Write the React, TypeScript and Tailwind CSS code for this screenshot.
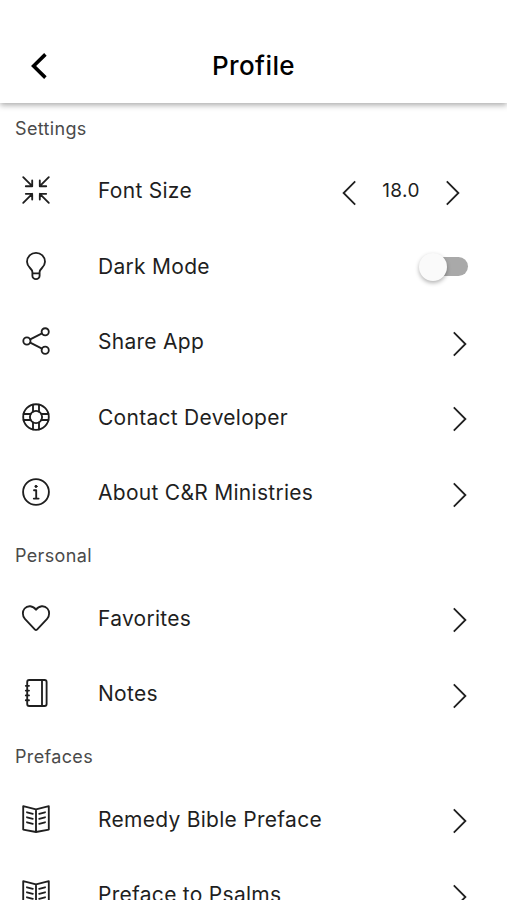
import { useState } from "react";
import type { ReactNode } from "react";

const icons: Record<string, ReactNode> = {
    resize: (
        <path d="M1.2 1.2l9 9M3.8 10.2h6.4V4.4M26.8 1.2l-9 9M24.2 10.2h-6.4V4.4M1.2 26.8l9-9M3.8 17.8h6.4v5.8M26.8 26.8l-9-9M24.2 17.8h-6.4v5.8" />
    ),
    bulb: (
        <path d="M10.4 21.4v-1.5C10.4 16.6 5 15.4 5 9.8a9 9 0 0 1 18 0c0 5.6-5.4 6.8-5.4 10.1v3.8a3.6 3.4 0 0 1-7.2 0zM10.4 21.4h7.2" />
    ),
    share: (
        <>
            <circle cx="4.9" cy="14" r="3.6" />
            <circle cx="23.2" cy="4.8" r="3.6" />
            <circle cx="23.2" cy="23.2" r="3.6" />
            <path d="M8.2 12.3L20 6.4M8.2 15.7L20 21.6" />
        </>
    ),
    support: (
        <>
            <circle cx="14" cy="14" r="12.8" />
            <circle cx="14" cy="14" r="6.1" />
            <path d="M11 1.6v7M17 1.6v7M11 19.4v7M17 19.4v7M1.6 11h7M1.6 17h7M19.4 11h7M19.4 17h7" />
        </>
    ),
    info: (
        <>
            <circle cx="14" cy="14" r="12.9" />
            <circle cx="14" cy="8.4" r="1.1" fill="currentColor" strokeWidth="1" />
            <path d="M12 12.2h2.2v8.2M11.8 20.6h4.8" />
        </>
    ),
    heart: (
        <path d="M13 25.6L2.9 14.9C.2 12 .3 7.1 2.6 4.5c3-3.3 8.4-3.1 11.4 1.3 3-4.4 8.4-4.6 11.4-1.3 2.3 2.6 2.4 7.5-.3 10.4L15 25.6q-1 .9-2 0z" />
    ),
    notes: (
        <>
            <rect x="5.2" y="1" width="19.4" height="26" rx="2" />
            <path d="M20 1v26M3.8 6.8h3.2M3.8 11.6h3.2M3.8 16.4h3.2M3.8 21.2h3.2" />
        </>
    ),
    book: (
        <path d="M14 4.3L1.2 1.2v23.4L14 27l12.8-2.4V1.2zM14 4.3V27M5 7.3l5.8 1.5M5 12.3l5.8 1.5M5 17.3l5.8 1.5M23 7.3l-5.8 1.5M23 12.3l-5.8 1.5M23 17.3l-5.8 1.5" />
    ),
};

function RowIcon({ name }: { name: string }) {
    return (
        <svg
            viewBox="0 0 28 28"
            className="w-7 h-7 mb-[2px] shrink-0 overflow-visible"
            fill="none"
            stroke="currentColor"
            strokeWidth="1.85"
            strokeLinecap="round"
            strokeLinejoin="round"
        >
            {icons[name]}
        </svg>
    );
}

function Chevron({ left = false }: { left?: boolean }) {
    return (
        <svg
            viewBox="0 0 14 26"
            className={`w-3.5 h-[26px] mt-[3px] ${left ? "rotate-180" : ""}`}
            fill="none"
            stroke="currentColor"
            strokeWidth="1.8"
        >
            <path d="M.8 1.4L12.4 13 .8 24.6" />
        </svg>
    );
}

function Row({ icon, label, children }: { icon: string; label: string; children?: ReactNode }) {
    return (
        <div className="h-[75.5px] pl-[22px] pr-[40px] flex items-center text-[#1f1f1f]">
            <RowIcon name={icon} />
            <span className="ml-12 flex-1 text-[21px] tracking-[0.28px] whitespace-nowrap">{label}</span>
            {children ?? (
                <button aria-label={label}>
                    <Chevron />
                </button>
            )}
        </div>
    );
}

function SectionTitle({ children }: { children: ReactNode }) {
    return (
        <h2 className="h-[50px] pl-[15px] flex items-center text-[18px] tracking-[0.35px] text-[#4a4a4a]">
            {children}
        </h2>
    );
}

export default function App() {
    const [fontSize, setFontSize] = useState(18);
    const [dark, setDark] = useState(false);

    return (
        <main className="w-full h-screen overflow-hidden bg-white font-['Inter',sans-serif] flex flex-col">
            {/* Header */}
            <header className="relative h-[103px] shrink-0 pt-7 grid grid-cols-[1fr_auto_1fr] items-center bg-white shadow-[0_2px_6px_rgba(0,0,0,0.35)]">
                <button className="pl-[30px] text-black" aria-label="Back">
                    <svg viewBox="0 0 18 28" className="w-[18px] h-7" fill="none" stroke="currentColor" strokeWidth="3.6">
                        <path d="M15.4 2.4L3.6 14l11.8 11.6" />
                    </svg>
                </button>
                <h1 className="pb-px text-[26px] font-medium tracking-[0.4px] text-black">Profile</h1>
            </header>

            {/* Settings list */}
            <div className="shrink-0 pt-[0.25px]">
                <SectionTitle>Settings</SectionTitle>
                <Row icon="resize" label="Font Size">
                    <div className="flex items-center mr-[7px]">
                        <button aria-label="Smaller" onClick={() => setFontSize(fontSize - 1)}>
                            <Chevron left />
                        </button>
                        <span className="w-[90px] text-center text-[19px] tracking-[0.4px]">{fontSize.toFixed(1)}</span>
                        <button aria-label="Larger" onClick={() => setFontSize(fontSize + 1)}>
                            <Chevron />
                        </button>
                    </div>
                </Row>
                <Row icon="bulb" label="Dark Mode">
                    <button
                        role="switch"
                        aria-checked={dark}
                        aria-label="Dark Mode"
                        onClick={() => setDark(!dark)}
                        className={`w-[46px] h-[19px] mr-[-1px] rounded-full bg-[#a9a9a9] flex items-center ${dark ? "justify-end" : ""}`}
                    >
                        <span className="w-7 h-7 -ml-[3px] shrink-0 rounded-full bg-[#fafafa] shadow-[0_2px_4px_rgba(0,0,0,0.3)]" />
                    </button>
                </Row>
                <Row icon="share" label="Share App" />
                <Row icon="support" label="Contact Developer" />
                <Row icon="info" label="About C&R Ministries" />

                <SectionTitle>Personal</SectionTitle>
                <Row icon="heart" label="Favorites" />
                <Row icon="notes" label="Notes" />

                <SectionTitle>Prefaces</SectionTitle>
                <Row icon="book" label="Remedy Bible Preface" />
                <Row icon="book" label="Preface to Psalms" />
            </div>
        </main>
    );
}
